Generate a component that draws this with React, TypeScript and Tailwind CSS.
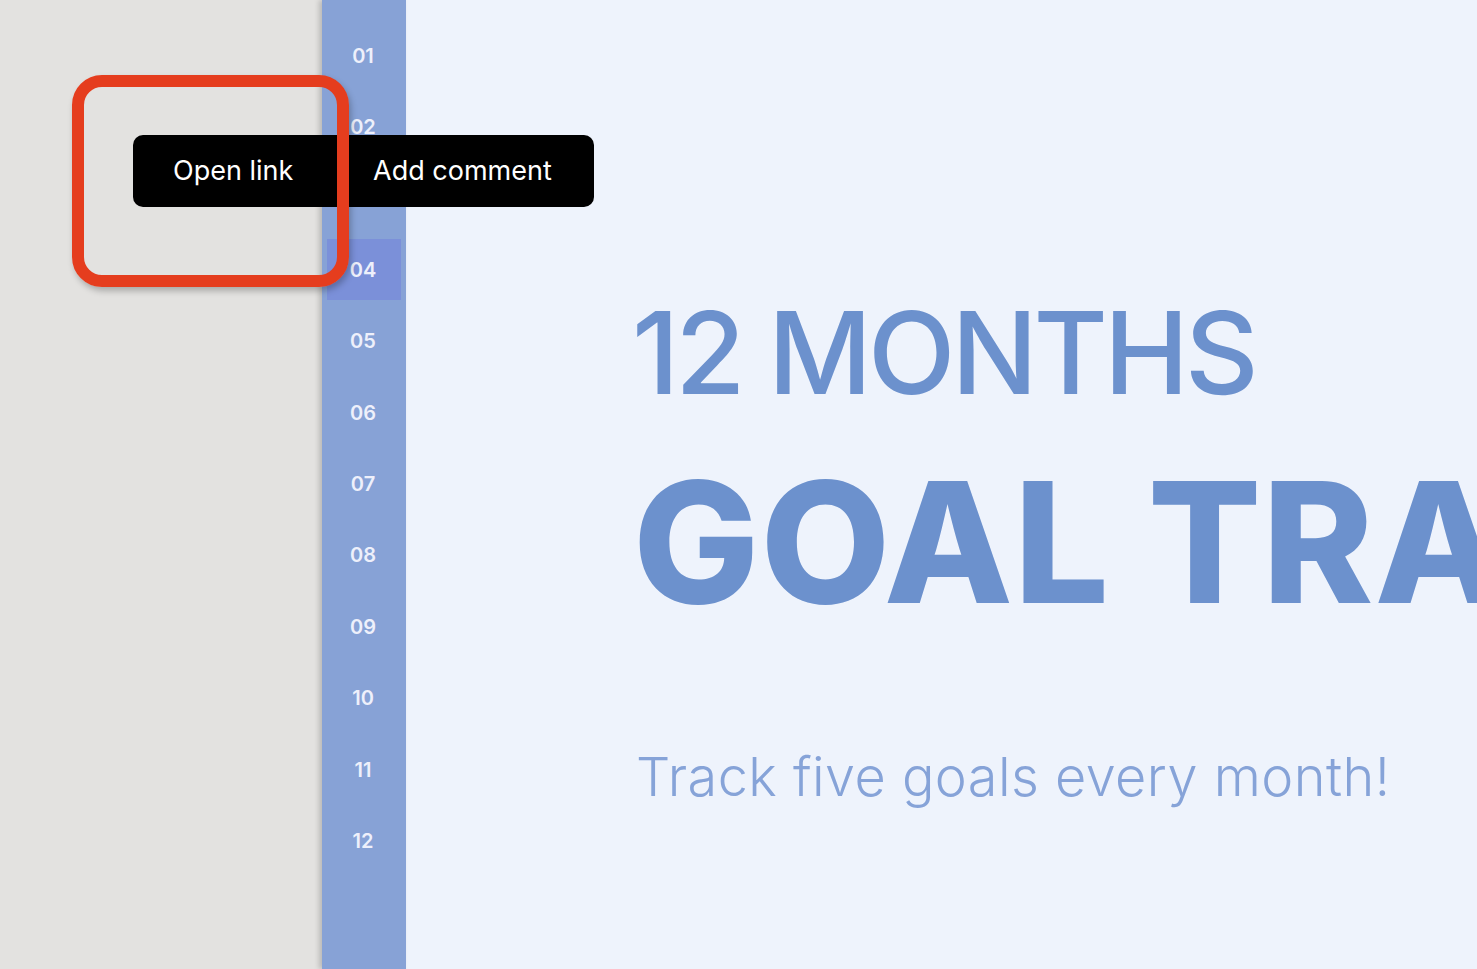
import React from "react";

const months = ["01", "02", "03", "04", "05", "06", "07", "08", "09", "10", "11", "12"];

export default function App() {
  return (
    <div className="relative w-[1477px] h-[969px] overflow-hidden flex bg-[#e3e2e0]" style={{ fontFamily: "Inter, 'Noto Sans', sans-serif" }}>
      <div className="w-[322px] shrink-0 bg-[#e3e2e0]" />
      <div className="w-[84px] shrink-0 bg-[#87a2d6] shadow-[-3px_0_5px_rgba(0,0,0,0.18)] relative z-10 pt-[20px] flex flex-col">
        {months.map((m) => (
          <div key={m} className="h-[71.4px] flex items-center justify-center">
            <div
              className={
                "w-[74px] h-[61px] flex items-center justify-center text-[20px] font-semibold text-[#eef0fb] pr-[2px] " +
                (m === "04" ? "bg-[#7b90d9]" : "")
              }
            >
              {m}
            </div>
          </div>
        ))}
      </div>
      <div className="flex-1 bg-[#eef3fc] pl-[230px] flex flex-col whitespace-nowrap overflow-hidden" style={{ fontFamily: "Inter, sans-serif" }}>
        <div className="mt-[296px] -ml-[4px] text-[114px] leading-none font-medium tracking-[-4px] text-[#6c91cd]">12 MONTHS</div>
        <div className="mt-[48px] -ml-[3px] text-[168px] leading-none font-extrabold tracking-[1px] text-[#6c91cd]">GOAL TRACKER</div>
        <div className="mt-[124px] text-[54px] leading-none font-light tracking-[0.45px] text-[#86a3d8]">Track five goals every month!</div>
      </div>

      <div className="absolute left-[133px] top-[135px] w-[461px] h-[72px] bg-black rounded-[10px] flex items-center z-20 text-white text-[27px]">
        <span className="w-[240px] pl-[40px]">Open link</span>
        <span>Add comment</span>
      </div>

      <div className="absolute left-[72px] top-[75px] w-[277px] h-[212px] border-[12px] border-[#e53d1e] rounded-[30px] z-30 shadow-[2px_4px_6px_rgba(0,0,0,0.25)]" />
    </div>
  );
}
